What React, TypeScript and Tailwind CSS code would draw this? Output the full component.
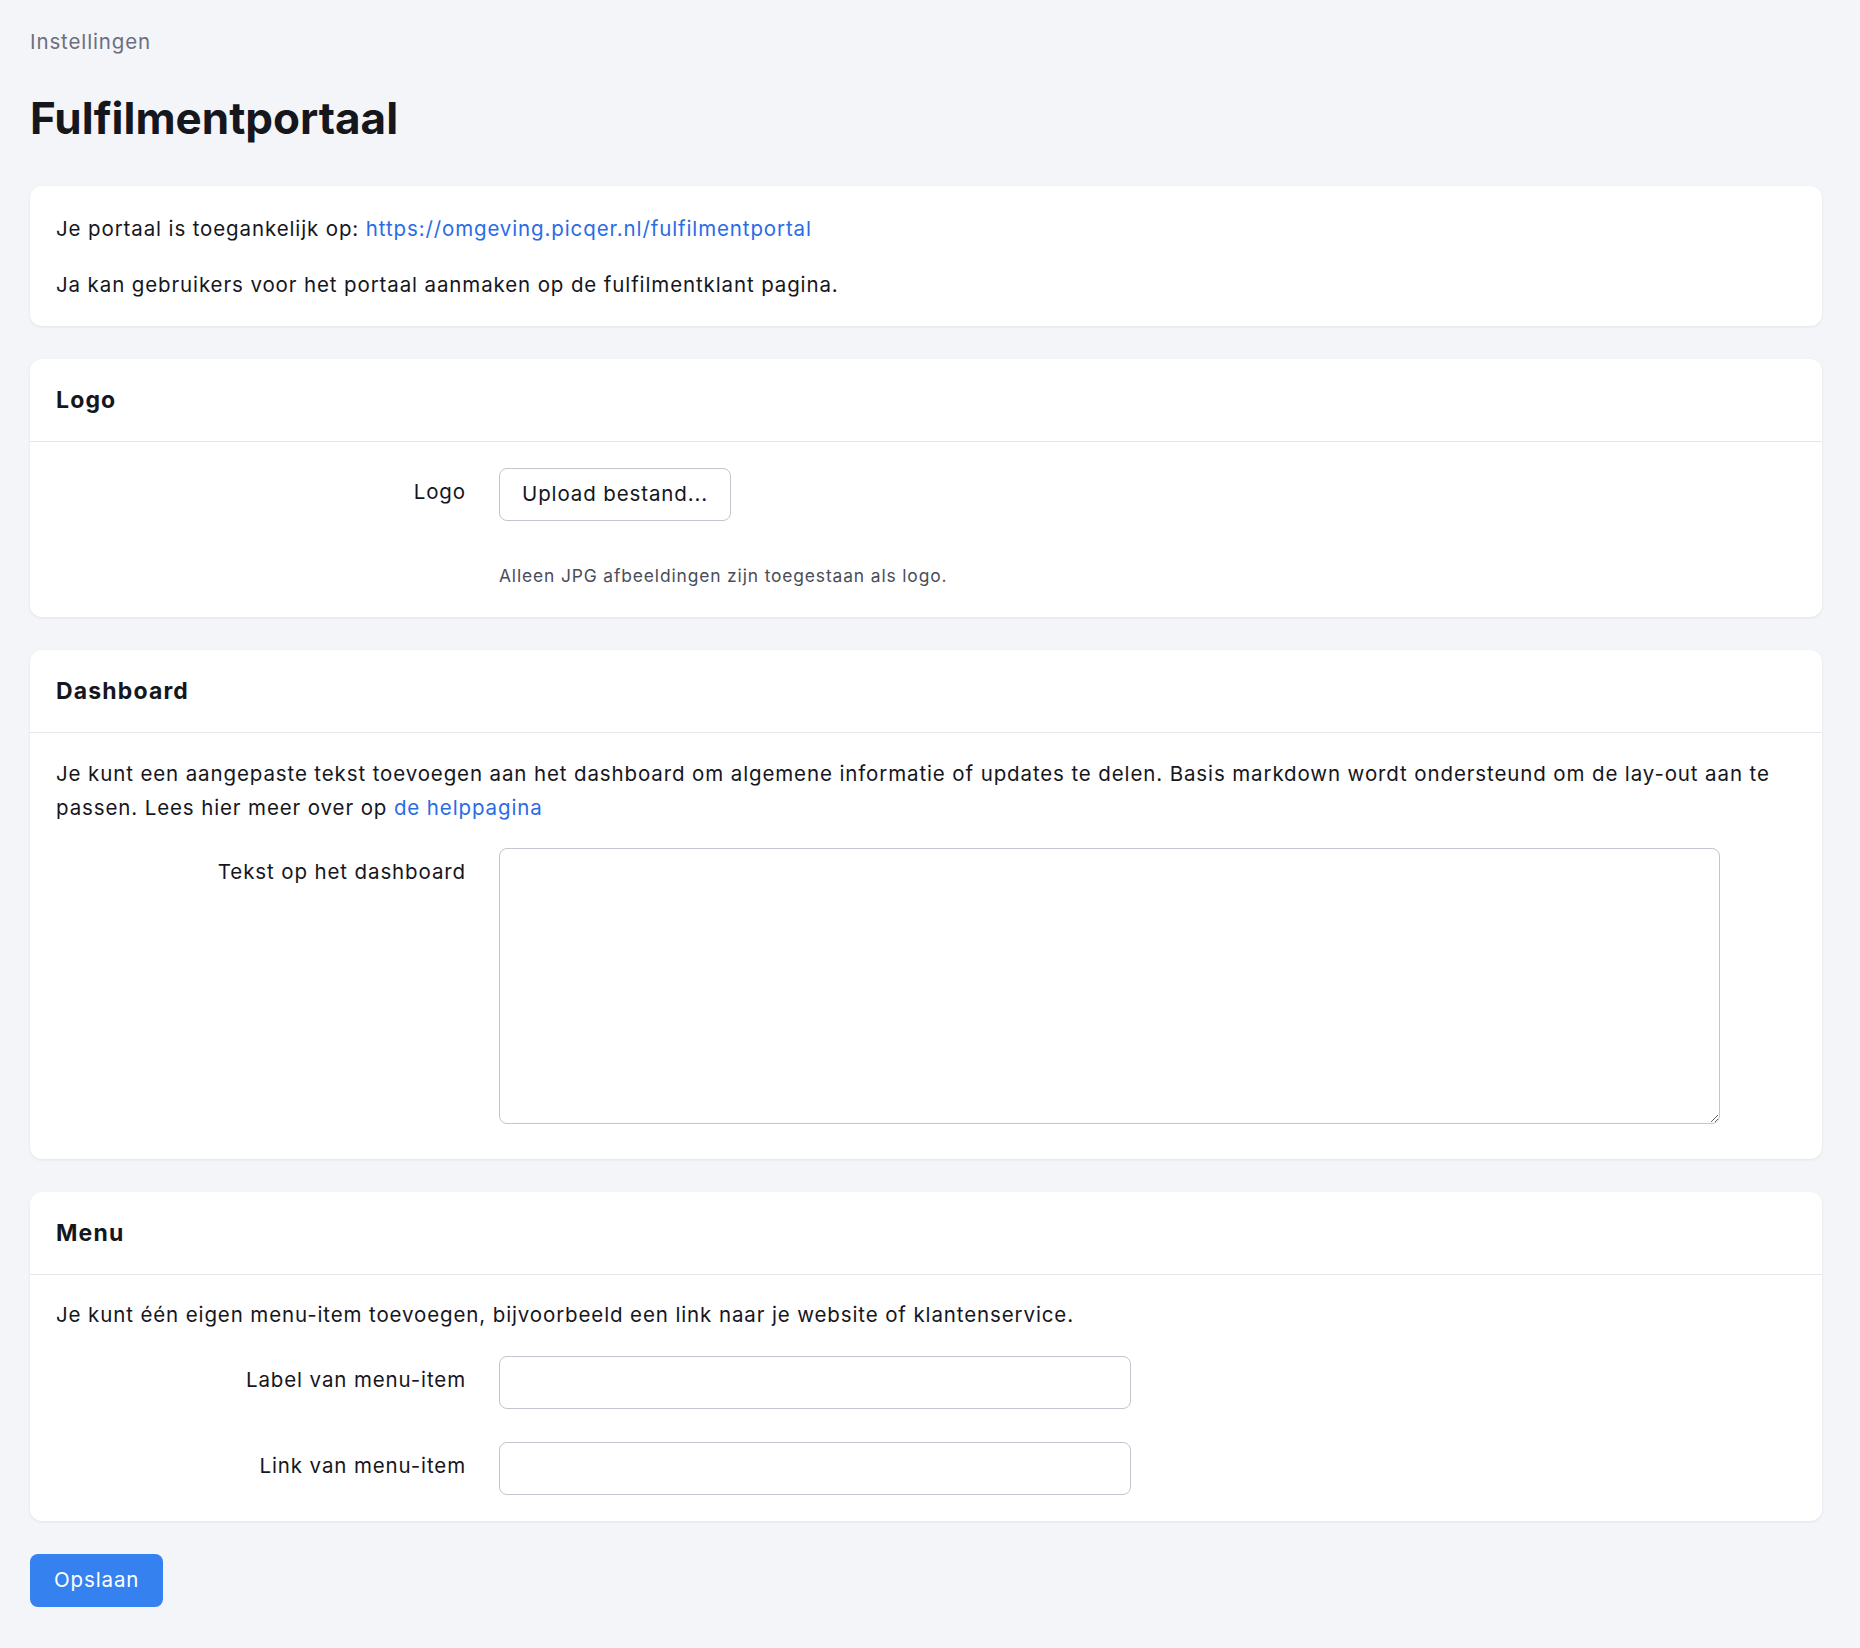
export default function App() {
  return (
    <div className="min-h-screen bg-[#f4f5f9] pl-[30px] pr-[38px] pt-[28px] pb-[40px] font-['Inter',sans-serif] tracking-[0.055em] text-[#16161d]">
      <div className="text-[20.5px] leading-[27px] text-[#6b6f7e]">Instellingen</div>
      <h1 className="mt-[37px] text-[44px] leading-[53px] font-bold tracking-normal">Fulfilmentportaal</h1>

      <div className="mt-[41px] flex flex-col gap-[33px]">
        <div className="rounded-xl bg-white px-[26px] pt-[26px] pb-[24px] shadow-[0_1px_3px_rgba(20,20,40,0.08)] text-[20.5px] leading-[34px]">
          <p>
            Je portaal is toegankelijk op:{" "}
            <a className="text-[#2a6be6]">https://omgeving.picqer.nl/fulfilmentportal</a>
          </p>
          <p className="mt-[22px]">Ja kan gebruikers voor het portaal aanmaken op de fulfilmentklant pagina.</p>
        </div>

        <Card title="Logo">
          <div className="px-[26px] pt-[26px] pb-[29px]">
            <div className="flex gap-[33px]">
              <div className="w-[410px] pt-[7px] text-right text-[20.5px] leading-[34px]">Logo</div>
              <button className="h-[53px] rounded-lg border border-[#c3c5ce] bg-white px-[22px] text-[20.5px]">
                Upload bestand...
              </button>
            </div>
            <p className="mt-[43px] ml-[443px] text-[17.4px] leading-[24px] tracking-[0.05em] text-[#4a4d5a]">
              Alleen JPG afbeeldingen zijn toegestaan als logo.
            </p>
          </div>
        </Card>

        <Card title="Dashboard">
          <div className="px-[26px] pt-[24px] pb-[35px]">
            <p className="text-[20.5px] leading-[34px]">
              Je kunt een aangepaste tekst toevoegen aan het dashboard om algemene informatie of updates te delen. Basis markdown wordt ondersteund om de lay-out aan te passen. Lees hier meer over op{" "}
              <a className="text-[#2a6be6]">de helppagina</a>
            </p>
            <div className="mt-[23px] flex gap-[33px]">
              <div className="w-[410px] pt-[7px] text-right text-[20.5px] leading-[34px]">Tekst op het dashboard</div>
              <textarea className="h-[276px] w-[1221px] rounded-lg border border-[#c3c5ce] bg-white" />
            </div>
          </div>
        </Card>

        <Card title="Menu">
          <div className="px-[26px] pt-[23px] pb-[26px]">
            <p className="text-[20.5px] leading-[34px]">
              Je kunt één eigen menu-item toevoegen, bijvoorbeeld een link naar je website of klantenservice.
            </p>
            <div className="mt-[24px] flex flex-col gap-[33px]">
              <Field label="Label van menu-item" />
              <Field label="Link van menu-item" />
            </div>
          </div>
        </Card>

        <div>
          <button className="h-[53px] rounded-lg bg-[#3581ef] px-[24px] text-[20.5px] text-white">Opslaan</button>
        </div>
      </div>
    </div>
  );
}

function Card({ title, children }: { title: string; children: React.ReactNode }) {
  return (
    <div className="rounded-xl bg-white shadow-[0_1px_3px_rgba(20,20,40,0.08)]">
      <div className="flex h-[83px] items-center border-b border-[#e6e7ec] px-[26px] text-[23px] font-bold tracking-[0.05em]">
        {title}
      </div>
      {children}
    </div>
  );
}

function Field({ label }: { label: string }) {
  return (
    <div className="flex gap-[33px]">
      <div className="w-[410px] pt-[7px] text-right text-[20.5px] leading-[34px]">{label}</div>
      <input className="h-[53px] w-[632px] rounded-lg border border-[#c3c5ce] bg-white px-3" />
    </div>
  );
}
